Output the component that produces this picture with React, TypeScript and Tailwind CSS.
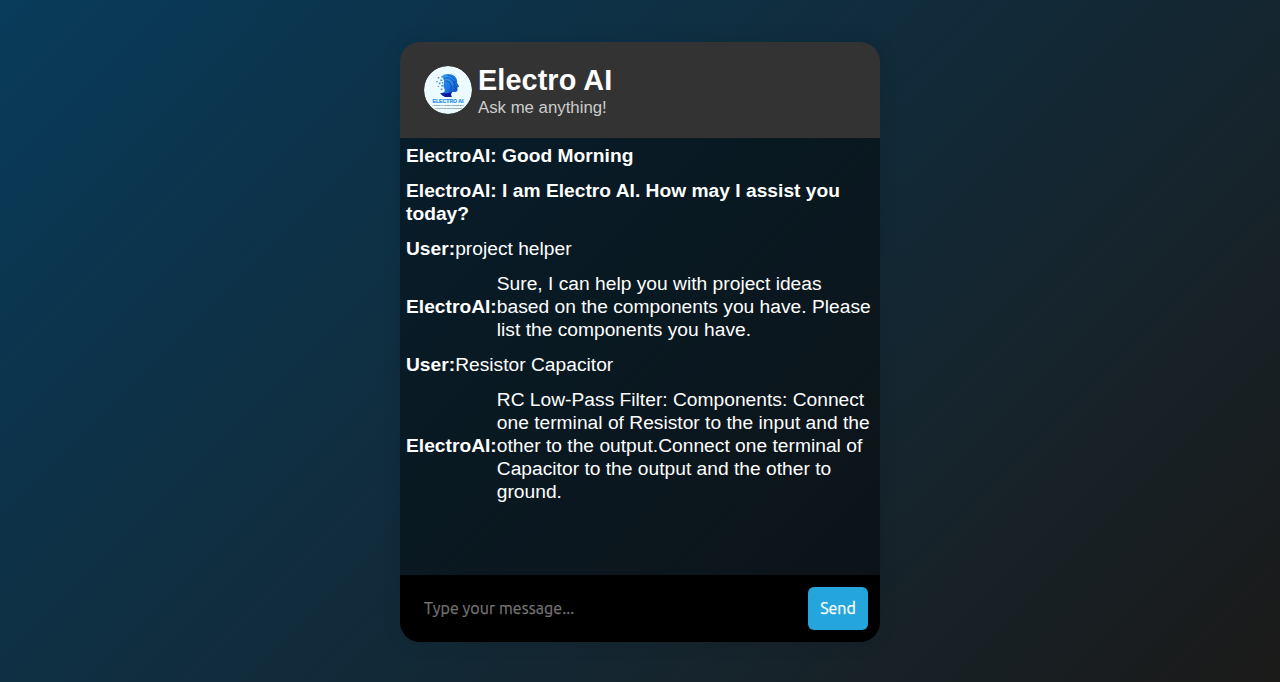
import React from "react";

const rows = [
  { who: "User:", text: "project helper" },
  { who: "ElectroAI:", text: "Sure, I can help you with project ideas based on the components you have. Please list the components you have." },
  { who: "User:", text: "Resistor Capacitor" },
  { who: "ElectroAI:", text: "RC Low-Pass Filter: Components: Connect one terminal of Resistor to the input and the other to the output.Connect one terminal of Capacitor to the output and the other to ground." },
];

function Logo() {
  return (
    <svg viewBox="0 0 48 48" className="size-12 shrink-0 rounded-full">
      <defs>
        <linearGradient id="hair" x1="0" y1="0" x2="1" y2="1">
          <stop offset="0" stopColor="#2f9df0" />
          <stop offset="0.5" stopColor="#1c78de" />
          <stop offset="1" stopColor="#0b3cb8" />
        </linearGradient>
      </defs>
      <circle cx="24" cy="24" r="24" fill="#ebfbff" />
      <g transform="translate(-1.2 0)">
        <path d="M20 9.500c3-2.200 9-2 12 .8 2.200 2.200 2.500 4.500 2.300 6.700l2 3.600-1.500.7-.2 3.200c-.3 1.500-2.800 1.700-5.100 1.500-1.300 1.200-1.800 2.400-.8 4.700h-6.500c-1.500-.4-3-1.500-4.500-3.500 3-.3 4.500-1.200 4.300-3.200-.2-1.800-1.800-2.700-1.300-5 .3-1.700 1.200-3 .3-4.800-.5-1.500-1.800-2.700-1-4.700z" fill="url(#hair)" />
        <path d="M17.300 27c4.500.8 8.700.1 11.900-1.300-1 1.500-1.200 3-.2 5.200h-6.500c-2-.6-3.600-1.800-5.200-3.900z" fill="#1018a0" />
        <path d="M21.500 12.500c3-1.500 7-1 9 2.500s1 5.500 2.500 8M21.500 15.500c3-1.200 5.500.2 6.500 3s.2 4.500-1.500 6.500M25 9.500c4 .2 6.500 3 7.500 7" fill="none" stroke="#0d45b0" strokeWidth="0.7" />
        <path d="M22 11c3.500-1 7.500.2 9.500 4M22 14c4-1 6.500 1 7.500 5" fill="none" stroke="#5cb7fa" strokeWidth="0.5" />
        <g fill="#3f93d4">
          <rect x="15" y="11" width="1.500" height="1.500" /><rect x="17.500" y="13.500" width="2" height="1.500" />
          <rect x="13.500" y="15" width="1.300" height="1.300" /><rect x="16" y="16.500" width="1.800" height="1.600" />
          <rect x="18.500" y="19" width="1.800" height="1.600" /><rect x="15" y="20" width="1.300" height="1" />
          <rect x="18" y="22.500" width="1.600" height="1.600" /><rect x="18.500" y="10" width="1.800" height="1.600" />
          <rect x="19" y="16" width="1.500" height="1.500" />
        </g>
      </g>
      <text x="24" y="37" textAnchor="middle" fontFamily="Liberation Sans, sans-serif" fontWeight="700" fontSize="5.500" textLength="31" lengthAdjust="spacingAndGlyphs" fill="#1d8ceb" stroke="#1d8ceb" strokeWidth="0.2">ELECTRO AI</text>
      <text x="24.200" y="40.200" textAnchor="middle" fontFamily="Liberation Sans, sans-serif" fontWeight="700" fontSize="2.300" textLength="32" lengthAdjust="spacingAndGlyphs" fill="#3d5560">ARTIFICIAL INTELLIGENCE BOT</text>
      <text x="24.200" y="42.900" textAnchor="middle" fontFamily="Liberation Sans, sans-serif" fontWeight="700" fontSize="2.300" textLength="27" lengthAdjust="spacingAndGlyphs" fill="#3d5560">FOR ELECTRONICS ENGINEER</text>
    </svg>
  );
}

export default function App() {
  return (
    <div className="flex h-[682px] w-full justify-center bg-[linear-gradient(135deg,#083b5a,#1b1a19)] pt-[42px] font-['Liberation_Sans',Arial,sans-serif] text-white">
      <main className="flex h-[600px] w-[480px] flex-col overflow-hidden rounded-[20px] shadow-[0_0_20px_rgba(0,0,0,0.1)]">
        <header className="flex h-24 shrink-0 items-center gap-1.5 bg-[#333] px-6">
          <Logo />
          <div className="pt-0.5">
            <h1 className="text-[28.8px] leading-[33px] font-bold tracking-[0.1px]">Electro AI</h1>
            <p className="pt-px text-[16.8px] leading-5 text-[#ccc]">Ask me anything!</p>
          </div>
        </header>
        <section className="flex flex-1 flex-col gap-3 bg-black/42 p-1.5 text-[19.2px] leading-[23px] tracking-[0.015px]">
          <p className="font-bold">ElectroAI: Good Morning</p>
          <p className="font-bold">ElectroAI: I am Electro AI. How may I assist you today?</p>
          {rows.map((row) => (
            <div key={row.text} className="flex items-center">
              <strong>{row.who}</strong>
              <p>{row.text}</p>
            </div>
          ))}
        </section>
        <form className="flex h-[67px] shrink-0 items-center bg-black p-3 font-[Ubuntu,'Noto_Sans',sans-serif]">
          <input placeholder="Type your message..." className="h-[43px] min-w-0 flex-1 px-3 pb-0.5 text-base tracking-[0.08px] outline-none [-webkit-text-stroke:0.25px] placeholder:text-[#757575]" />
          <button type="button" className="h-[43px] w-[60px] rounded-md bg-[#24a5db] pb-0.5 text-base [-webkit-text-stroke:0.25px]">Send</button>
        </form>
      </main>
    </div>
  );
}
